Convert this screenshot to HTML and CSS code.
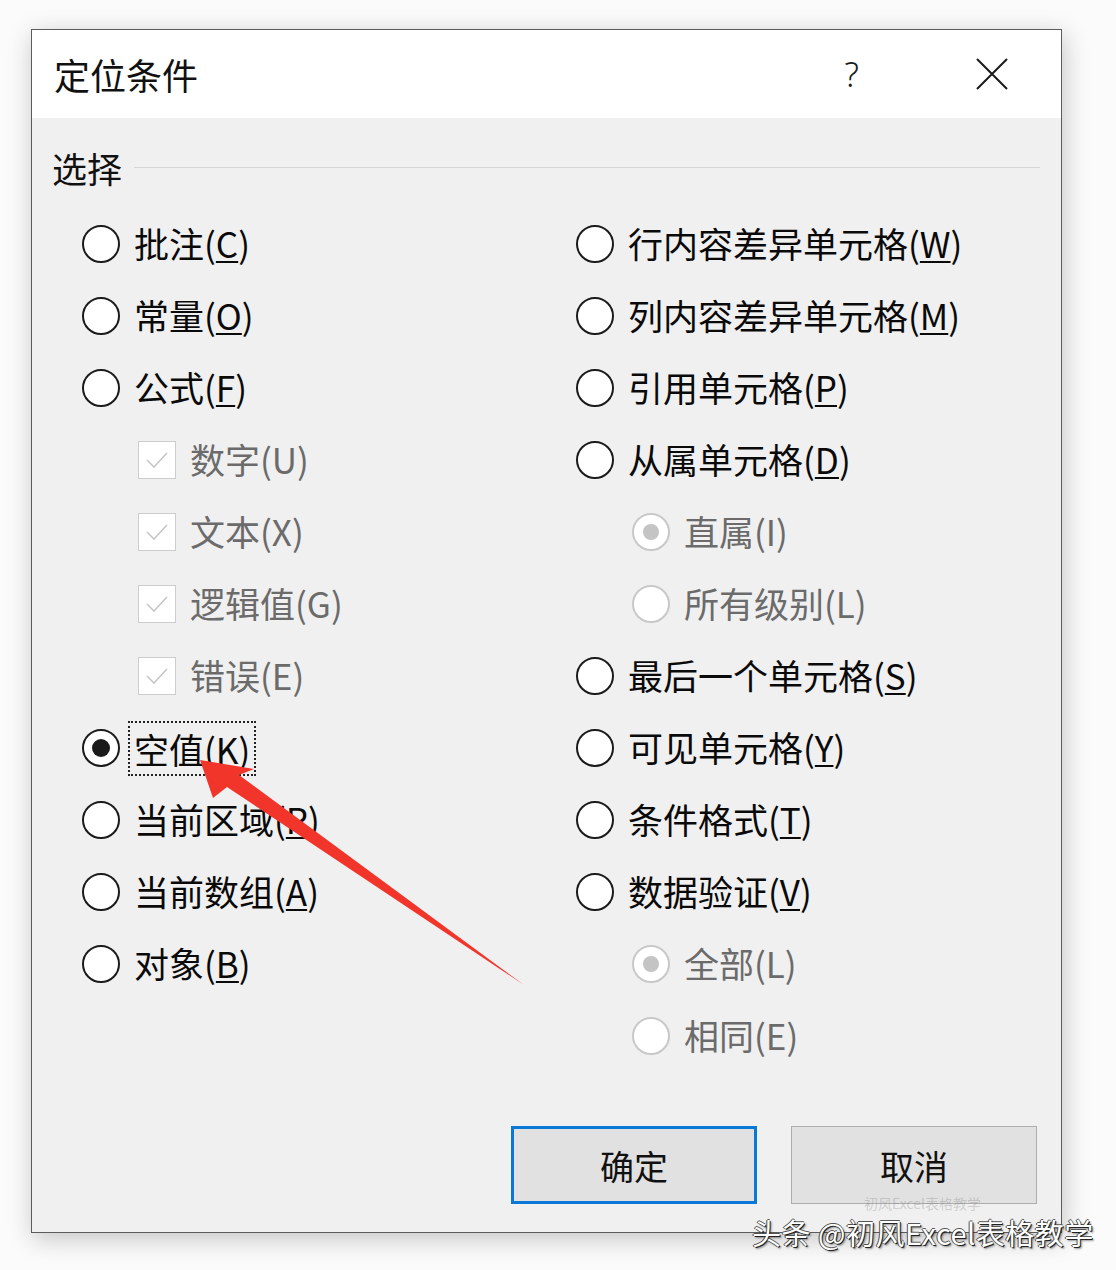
FILE: index.html
```html
<!DOCTYPE html>
<html lang="zh-CN">
<head>
    <meta charset="UTF-8">
    <meta name="viewport" content="width=device-width, initial-scale=1.0">
    <title>定位条件</title>
    <link rel="stylesheet" href="styles.css">
</head>
<body>
    <div class="page">
        <div class="dialog">
            <div class="titlebar">
                <span class="title">定位条件</span>
                <span class="help">?</span>
                <svg class="close" width="34" height="34" viewBox="0 0 34 34">
                    <path d="M2 2 L32 32 M32 2 L2 32" stroke="#1a1a1a" stroke-width="2" fill="none"/>
                </svg>
            </div>

            <div class="content">
                <div class="group-head">
                    <span>选择</span>
                    <div class="group-line"></div>
                </div>

                <div class="options">
                    <div class="col">
                        <div class="opt"><span class="radio"></span><span class="label">批注(<u>C</u>)</span></div>
                        <div class="opt"><span class="radio"></span><span class="label">常量(<u>O</u>)</span></div>
                        <div class="opt"><span class="radio"></span><span class="label">公式(<u>F</u>)</span></div>
                        <div class="opt sub"><span class="check"><svg width="22" height="16" viewBox="0 0 22 16"><path d="M1 8 L8 15 L21 1" stroke="#c4c4c4" stroke-width="1.5" fill="none"/></svg></span><span class="label off">数字(U)</span></div>
                        <div class="opt sub"><span class="check"><svg width="22" height="16" viewBox="0 0 22 16"><path d="M1 8 L8 15 L21 1" stroke="#c4c4c4" stroke-width="1.5" fill="none"/></svg></span><span class="label off">文本(X)</span></div>
                        <div class="opt sub"><span class="check"><svg width="22" height="16" viewBox="0 0 22 16"><path d="M1 8 L8 15 L21 1" stroke="#c4c4c4" stroke-width="1.5" fill="none"/></svg></span><span class="label off">逻辑值(G)</span></div>
                        <div class="opt sub"><span class="check"><svg width="22" height="16" viewBox="0 0 22 16"><path d="M1 8 L8 15 L21 1" stroke="#c4c4c4" stroke-width="1.5" fill="none"/></svg></span><span class="label off">错误(E)</span></div>
                        <div class="opt"><span class="radio on"></span><span class="label focus">空值(<u>K</u>)</span></div>
                        <div class="opt"><span class="radio"></span><span class="label">当前区域(<u>R</u>)</span></div>
                        <div class="opt"><span class="radio"></span><span class="label">当前数组(<u>A</u>)</span></div>
                        <div class="opt"><span class="radio"></span><span class="label">对象(<u>B</u>)</span></div>
                    </div>
                    <div class="col">
                        <div class="opt"><span class="radio"></span><span class="label">行内容差异单元格(<u>W</u>)</span></div>
                        <div class="opt"><span class="radio"></span><span class="label">列内容差异单元格(<u>M</u>)</span></div>
                        <div class="opt"><span class="radio"></span><span class="label">引用单元格(<u>P</u>)</span></div>
                        <div class="opt"><span class="radio"></span><span class="label">从属单元格(<u>D</u>)</span></div>
                        <div class="opt sub"><span class="radio dim on"></span><span class="label off">直属(I)</span></div>
                        <div class="opt sub"><span class="radio dim"></span><span class="label off">所有级别(L)</span></div>
                        <div class="opt"><span class="radio"></span><span class="label">最后一个单元格(<u>S</u>)</span></div>
                        <div class="opt"><span class="radio"></span><span class="label">可见单元格(<u>Y</u>)</span></div>
                        <div class="opt"><span class="radio"></span><span class="label">条件格式(<u>T</u>)</span></div>
                        <div class="opt"><span class="radio"></span><span class="label">数据验证(<u>V</u>)</span></div>
                        <div class="opt sub"><span class="radio dim on"></span><span class="label off">全部(L)</span></div>
                        <div class="opt sub"><span class="radio dim"></span><span class="label off">相同(E)</span></div>
                    </div>
                </div>

                <div class="buttons">
                    <button class="btn primary">确定</button>
                    <button class="btn">取消</button>
                </div>
            </div>
        </div>

        <svg class="arrow" width="1116" height="1270" viewBox="0 0 1116 1270">
            <polygon points="200,760 213,798 227,787 524,985 239,775 254,769" fill="#f2352b"/>
        </svg>

        <div class="watermark">
            <span class="ghost">初风Excel表格教学</span>
            <span class="mark">头条 @初风Excel表格教学</span>
        </div>
    </div>
</body>
</html>
```

FILE: styles.css
```css
body {
    margin: 0;
    background-color: #fbfbfb;
    font-family: "Noto Sans CJK SC", "Noto Sans", sans-serif;
}

.page {
    position: relative;
    width: 1116px;
    height: 1270px;
    padding: 29px 0 0 31px;
    box-sizing: border-box;
}

.dialog {
    width: 1031px;
    box-sizing: border-box;
    border: 1px solid #5c5c5c;
    box-shadow: 2px 6px 24px rgba(0, 0, 0, 0.22);
    background-color: #f0f0f0;
}

.titlebar {
    display: flex;
    align-items: center;
    height: 88px;
    background-color: #ffffff;
    padding-left: 22px;
}

.title {
    font-size: 36px;
    color: #111;
    flex: 1;
}

.help {
    font-family: "Noto Sans", sans-serif;
    font-size: 34px;
    font-weight: 300;
    color: #1a1a1a;
    margin-right: 116px;
}

.close {
    margin-right: 52px;
}

.content {
    padding: 29px 21px 28px 20px;
}

.group-head {
    display: flex;
    align-items: center;
    height: 40px;
    font-size: 35px;
    color: #111;
}

.group-line {
    flex: 1;
    height: 1px;
    background-color: #d6d6d6;
    margin-left: 12px;
}

.options {
    display: grid;
    grid-template-columns: 494px 1fr;
    padding-left: 30px;
    margin-top: 21px;
}

.opt {
    display: flex;
    align-items: center;
    height: 72px;
}

.opt.sub {
    padding-left: 56px;
}

.radio {
    width: 34px;
    height: 34px;
    border: 2px solid #1a1a1a;
    border-radius: 50%;
    background-color: #ffffff;
    display: flex;
    align-items: center;
    justify-content: center;
    flex-shrink: 0;
}

.radio.on::after {
    content: "";
    width: 18px;
    height: 18px;
    border-radius: 50%;
    background-color: #1a1a1a;
}

.radio.dim {
    border-color: #c8c8c8;
}

.radio.dim.on::after {
    width: 16px;
    height: 16px;
    background-color: #c4c4c4;
}

.check {
    width: 36px;
    height: 36px;
    border: 1px solid #cdcdcd;
    background-color: #ffffff;
    display: flex;
    align-items: center;
    justify-content: center;
    flex-shrink: 0;
}

.label {
    font-size: 35px;
    color: #0a0a0a;
    margin-left: 14px;
    line-height: 1;
    white-space: nowrap;
    position: relative;
    top: -2px;
}

.label u {
    text-decoration-thickness: 2px;
    text-underline-offset: 3px;
}

.label.off {
    color: #6b6b6b;
    margin-left: 14px;
}

.label.focus {
    margin-left: 10px;
    padding: 8px 4px;
    top: 0;
    outline: 2px dotted #222;
    outline-offset: 0;
}

.buttons {
    display: flex;
    justify-content: flex-end;
    gap: 34px;
    margin-top: 54px;
    padding-right: 3px;
}

.btn {
    width: 246px;
    height: 78px;
    font-family: "Noto Sans CJK SC", sans-serif;
    font-size: 34px;
    color: #111;
    background-color: #e1e1e1;
    border: 1px solid #adadad;
    padding: 0;
}

.btn.primary {
    border: 3px solid #0a78d6;
}

.arrow {
    position: absolute;
    left: 0;
    top: 0;
    pointer-events: none;
}

.watermark {
    position: absolute;
    left: 752px;
    top: 1196px;
    width: 360px;
    height: 60px;
}

.ghost {
    position: absolute;
    left: 112px;
    top: 0;
    font-size: 14px;
    line-height: 1;
    color: rgba(120, 120, 120, 0.3);
    white-space: nowrap;
}

.mark {
    position: absolute;
    left: 0;
    top: 22px;
    font-size: 29px;
    line-height: 1;
    color: #ffffff;
    white-space: nowrap;
    letter-spacing: 0.5px;
    text-shadow: 1px 1px 0 #222, -1px 0 0 #444, 0 -1px 0 #555, 2px 2px 2px rgba(0, 0, 0, 0.4);
}
```
